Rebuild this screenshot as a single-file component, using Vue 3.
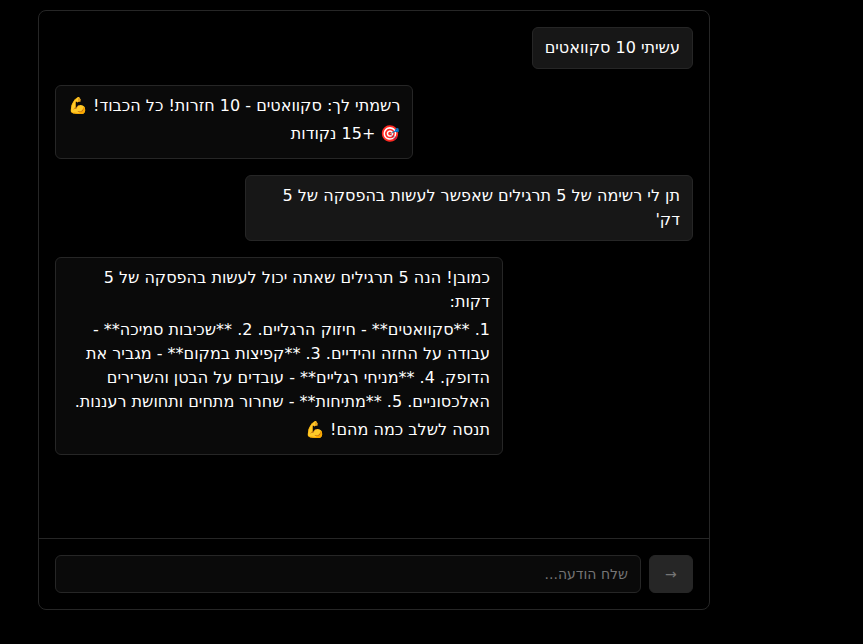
<script setup>
const messages = [
  { from: 'user', lines: ['עשיתי 10 סקוואטים'] },
  { from: 'bot', lines: ['רשמתי לך: סקוואטים - 10 חזרות! כל הכבוד! 💪', '🎯 +15 נקודות'] },
  { from: 'user', lines: ["תן לי רשימה של 5 תרגילים שאפשר לעשות בהפסקה של 5 דק'"] },
  {
    from: 'bot',
    lines: [
      'כמובן! הנה 5 תרגילים שאתה יכול לעשות בהפסקה של 5 דקות:',
      '1. **סקוואטים** - חיזוק הרגליים. 2. **שכיבות סמיכה** - עבודה על החזה והידיים. 3. **קפיצות במקום** - מגביר את הדופק. 4. **מניחי רגליים** - עובדים על הבטן והשרירים האלכסוניים. 5. **מתיחות** - שחרור מתחים ותחושת רעננות.',
      'תנסה לשלב כמה מהם! 💪',
    ],
  },
]
</script>

<template>
  <main class="page" dir="rtl">
    <section class="chat">
      <div class="messages">
        <div v-for="(m, i) in messages" :key="i" class="bubble" :class="m.from">
          <p v-for="(line, j) in m.lines" :key="j">{{ line }}</p>
        </div>
      </div>
      <form class="composer" @submit.prevent>
        <button class="send" disabled>→</button>
        <input class="field" type="text" placeholder="שלח הודעה..." />
      </form>
    </section>
  </main>
</template>

<style>
body {
  background: #000;
}
</style>

<style scoped>
.page {
  box-sizing: border-box;
  height: 644px;
  padding: 10px 153.05px 34px 37.95px;
  background: #000;
  color: #fff;
  font-family: "DejaVu Sans", sans-serif;
}
.chat {
  box-sizing: border-box;
  height: 600px;
  display: flex;
  flex-direction: column;
  border: 1px solid #262626;
  border-radius: 8px;
}
.messages {
  flex: 1;
  display: flex;
  flex-direction: column;
  gap: 16px;
  padding: 16px;
}
.bubble {
  box-sizing: border-box;
  max-width: 448px;
  padding: 8px 12px;
  border: 1px solid #262626;
  border-radius: 6px;
  font-size: 16px;
  line-height: 24px;
}
.user {
  align-self: flex-start;
  background: #171717;
}
.bot {
  align-self: flex-end;
  background: #0a0a0a;
}
.bubble p {
  margin: 0;
}
.bot p {
  margin-bottom: 4px;
}
.composer {
  display: flex;
  gap: 8px;
  padding: 16px;
  border-top: 1px solid #262626;
}
.send,
.field {
  box-sizing: border-box;
  height: 38px;
  margin: 0;
  border: 1px solid #262626;
  border-radius: 6px;
  font-family: inherit;
  font-size: 14px;
}
.send {
  width: 44px;
  padding: 0;
  background: #262626;
  color: #757575;
}
.field {
  flex: 1;
  min-width: 0;
  padding: 8px 12px;
  background: #0a0a0a;
  color: #fff;
  outline: none;
}
.field::placeholder {
  color: #757575;
}
</style>
